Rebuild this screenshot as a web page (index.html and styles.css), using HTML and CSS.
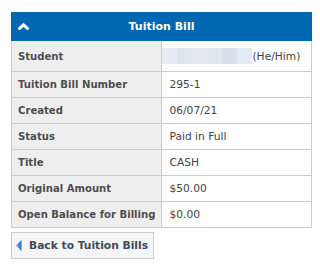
FILE: index.html
```html
<!DOCTYPE html>
<html lang="en">
  <head>
    <meta charset="UTF-8" />
    <meta name="viewport" content="width=device-width, initial-scale=1.0" />
    <title>Tuition Bill</title>
    <link rel="stylesheet" href="styles.css">
  </head>
  <body>
    <div class="panel">
      <!-- header -->
      <div class="panel-header">
        <svg class="collapse-icon" width="11" height="7" viewBox="0 0 11 7">
          <polyline points="1.5,5.5 5.5,1.8 9.5,5.5" fill="none" stroke="#fff" stroke-width="3" stroke-linecap="square" />
        </svg>
        <span class="panel-title">Tuition Bill</span>
      </div>
      <!-- details -->
      <table class="detail-table">
        <tbody>
          <tr class="row-student">
            <th>Student</th>
            <td><span class="photo-blur"></span><span class="pronoun">(He/Him)</span></td>
          </tr>
          <tr>
            <th>Tuition Bill Number</th>
            <td>295-1</td>
          </tr>
          <tr>
            <th>Created</th>
            <td>06/07/21</td>
          </tr>
          <tr>
            <th>Status</th>
            <td>Paid in Full</td>
          </tr>
          <tr>
            <th>Title</th>
            <td>CASH</td>
          </tr>
          <tr>
            <th>Original Amount</th>
            <td>$50.00</td>
          </tr>
          <tr>
            <th>Open Balance for Billing</th>
            <td>$0.00</td>
          </tr>
        </tbody>
      </table>
    </div>
    <!-- back button -->
    <button class="back-button">
      <svg class="back-icon" width="6" height="11" viewBox="0 0 6 11">
        <defs>
          <linearGradient id="backGrad" x1="0" y1="0" x2="1" y2="0">
            <stop offset="0" stop-color="#6fb0f0" />
            <stop offset="1" stop-color="#1d6cc8" />
          </linearGradient>
        </defs>
        <polygon points="0,5.5 5.5,0 5.5,11" fill="url(#backGrad)" />
      </svg>
      <span>Back to Tuition Bills</span>
    </button>
  </body>
</html>
```

FILE: styles.css
```css
/* base */
body {
  font-family: "DejaVu Sans", Verdana, sans-serif;
  background-color: #fff;
  margin: 0;
  padding: 12px 8px 0 11px;
}
/* panel */
.panel {
  width: 301px;
}
.panel-header {
  position: relative;
  background-color: #0067b2;
  height: 29px;
  display: flex;
  align-items: center;
  justify-content: center;
}
.collapse-icon {
  position: absolute;
  left: 7px;
  top: 11px;
}
.panel-title {
  color: #fff;
  font-weight: bold;
  font-size: 11px;
}
/* table */
.detail-table {
  width: 100%;
  border-collapse: collapse;
  font-size: 10.7px;
  line-height: 13px;
}
.detail-table th,
.detail-table td {
  border: 1px solid #cccccc;
  padding: 6px 6px;
  text-align: left;
  vertical-align: middle;
}
.detail-table th {
  width: 135px;
  background-color: #eeeeee;
  color: #4e4e4e;
  font-size: 10.1px;
  font-weight: bold;
  white-space: nowrap;
}
.detail-table td {
  color: #444;
  padding-left: 7px;
}
.detail-table tr:first-child th,
.detail-table tr:first-child td {
  border-top: none;
}
.row-student th,
.row-student td {
  padding-top: 7px;
  padding-bottom: 7px;
  white-space: nowrap;
}
.photo-blur {
  display: inline-block;
  width: 90px;
  height: 16px;
  margin-left: -7px;
  margin-right: 0;
  vertical-align: middle;
  background: linear-gradient(to right, #e6ecf3 0, #e6ecf3 15px, #dde6ef 15px, #dde6ef 30px, #e2e9f1 30px, #e2e9f1 45px, #dfe7f0 45px, #dfe7f0 60px, #d6e1ec 60px, #d6e1ec 75px, #e3eaf2 75px);
}
.pronoun {
  vertical-align: middle;
}
/* button */
.back-button {
  margin-top: 4px;
  display: flex;
  align-items: center;
  gap: 7px;
  height: 27px;
  padding: 0 5px 0 4px;
  background-color: #f5f5f5;
  border: 1px solid #cccccc;
  font-family: "DejaVu Sans", Verdana, sans-serif;
  font-size: 10.7px;
  font-weight: bold;
  color: #3f4a5a;
  cursor: pointer;
}
```
